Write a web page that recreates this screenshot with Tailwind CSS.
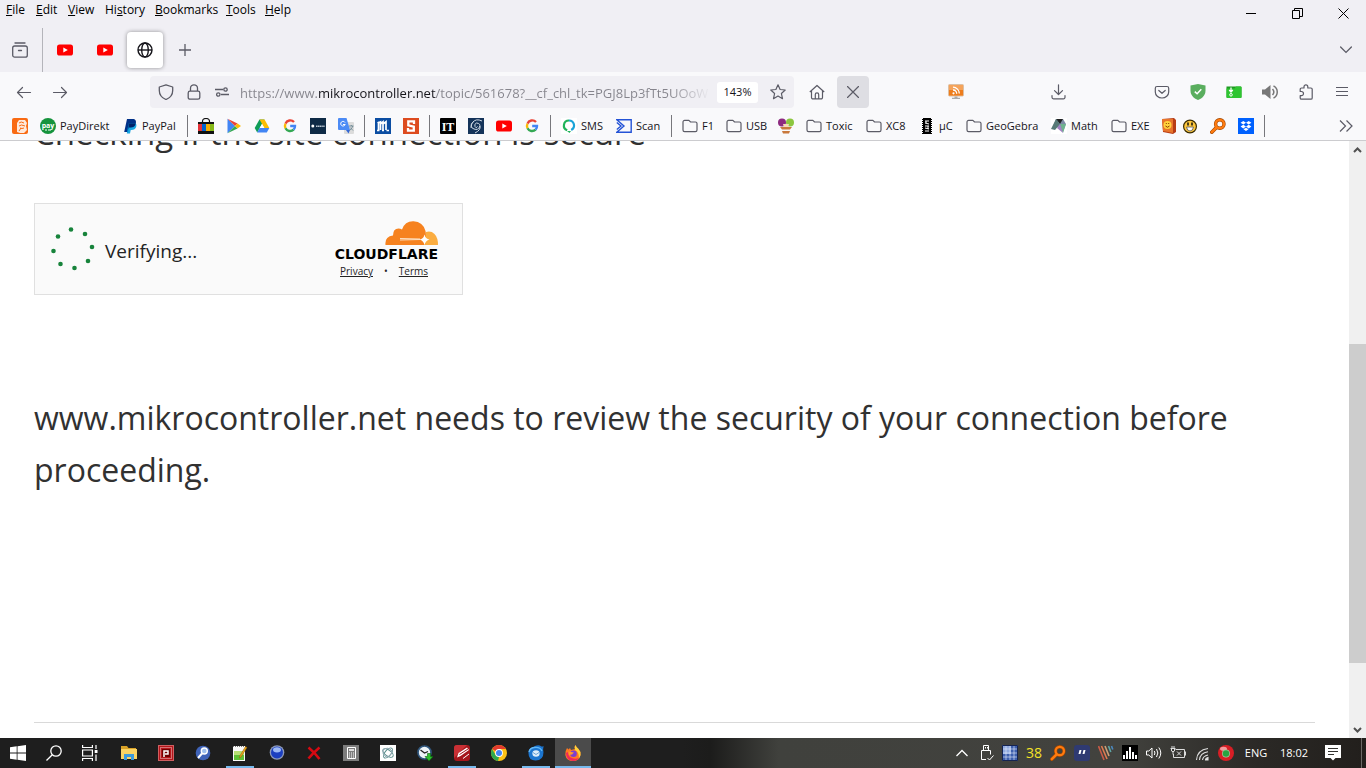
<!DOCTYPE html>
<html lang="en">

<head>
    <meta charset="UTF-8">
    <meta name="viewport" content="width=device-width, initial-scale=1.0">
    <title>www.mikrocontroller.net</title>
    <script src="https://cdn.jsdelivr.net/npm/@tailwindcss/browser@4"></script>
</head>

<body class="h-screen flex flex-col overflow-hidden bg-white font-['Open_Sans','Noto_Sans',sans-serif] text-[#15141a]">

    <!-- Shared icons -->
    <svg class="hidden">
        <symbol id="folder" viewBox="0 0 16 16">
            <path d="M1 4.2V12a1.6 1.6 0 0 0 1.6 1.6h10.8A1.6 1.6 0 0 0 15 12V5.6A1.6 1.6 0 0 0 13.4 4H8.6L6.9 2.4H2.6A1.6 1.6 0 0 0 1 4z" fill="none" stroke="#5b5b66" stroke-width="1.2" stroke-linejoin="round" />
        </symbol>
        <symbol id="youtube" viewBox="0 0 16 16">
            <rect y="2.4" width="16" height="11.2" rx="2.6" fill="#f00" />
            <path d="M6.3 5.5v5L10.8 8z" fill="#fff" />
        </symbol>
        <symbol id="google" viewBox="0 0 16 16">
            <g fill="none" stroke-width="2.4">
                <path d="M12 4A5.1 5.1 0 0 0 3.5 5.7" stroke="#ea4335" />
                <path d="M3.5 5.7a5.1 5.1 0 0 0 0 4.6" stroke="#fbbc05" />
                <path d="M3.5 10.3A5.1 5.1 0 0 0 11.6 11.6" stroke="#34a853" />
                <path d="M11.6 11.6A4.8 4.8 0 0 0 13 8H8.2" stroke="#4285f4" />
            </g>
        </symbol>
        <symbol id="magnifier" viewBox="0 0 16 16">
            <path d="M6.4 9.6 1.8 14.2" stroke="#a34700" stroke-width="3.6" stroke-linecap="round" />
            <circle cx="9.8" cy="6" r="4.2" fill="none" stroke="#a34700" stroke-width="3.4" />
            <path d="M6.4 9.6 1.8 14.2" stroke="#ff7b0f" stroke-width="2.4" stroke-linecap="round" />
            <circle cx="9.8" cy="6" r="4.2" fill="none" stroke="#ff7b0f" stroke-width="2.2" />
        </symbol>
    </svg>

    <!-- Menu bar and window controls -->
    <header class="bg-[#f0eff4] shrink-0">
        <div class="flex h-7 items-start justify-between">
            <nav class="flex h-5 items-center gap-3 pl-[6px] text-[12px] leading-4 text-black" aria-label="Menu">
                <button class="w-[18px] text-left"><u>F</u>ile</button>
                <button class="w-5 text-left"><u>E</u>dit</button>
                <button class="w-[25px] text-left"><u>V</u>iew</button>
                <button class="w-[38px] text-left">Hi<u>s</u>tory</button>
                <button class="w-[59px] text-left"><u>B</u>ookmarks</button>
                <button class="w-[27px] text-left"><u>T</u>ools</button>
                <button class="w-[25px] text-left"><u>H</u>elp</button>
            </nav>
            <div class="flex h-[27px]">
                <button class="grid w-[46px] place-items-center" aria-label="Minimize"><svg class="size-[11px]" viewBox="0 0 11 11"><path d="M0 5.5h10" stroke="#000" /></svg></button>
                <button class="grid w-[46px] place-items-center" aria-label="Restore"><svg class="size-[11px]" viewBox="0 0 11 11" fill="none" stroke="#000"><path d="M.5 2.5h7v8h-7zM2.5 2.5v-2h8v8h-3" /></svg></button>
                <button class="grid w-[46px] place-items-center" aria-label="Close"><svg class="size-[11px]" viewBox="0 0 11 11"><path d="M.5.5l10 10M10.5.5l-10 10" stroke="#000" /></svg></button>
            </div>
        </div>

        <!-- Tabs -->
        <div class="flex h-11 items-center">
            <button class="grid w-[42px] place-items-center pr-[2px]" aria-label="Recent browsing">
                <svg class="size-4" viewBox="0 0 16 16" fill="none" stroke="#5b5b66" stroke-width="1.3" stroke-linecap="round"><path d="M3 1h10" /><rect x=".7" y="4" width="14.6" height="11.2" rx="2" /><path d="M6.5 8.5h3" /></svg>
            </button>
            <div class="h-11 w-px bg-[#b4b4ba]"></div>
            <button class="ml-[2px] grid size-10 place-items-center" aria-label="YouTube"><svg class="size-4"><use href="#youtube" /></svg></button>
            <button class="grid size-10 place-items-center" aria-label="YouTube"><svg class="size-4"><use href="#youtube" /></svg></button>
            <button class="ml-[2px] grid size-9 place-items-center rounded bg-white shadow-[0_0_4px_rgba(0,0,0,0.4)]" aria-label="www.mikrocontroller.net">
                <svg class="size-4" viewBox="0 0 16 16" fill="none" stroke="#15141a" stroke-width="1.4"><circle cx="8" cy="8" r="7" /><ellipse cx="8" cy="8" rx="3.3" ry="7" /><path d="M1 8h14" /></svg>
            </button>
            <button class="ml-1 grid size-9 place-items-center" aria-label="New tab"><svg class="size-3" viewBox="0 0 12 12"><path d="M6 0v12M0 6h12" stroke="#5b5b66" stroke-width="1.3" /></svg></button>
            <button class="ml-auto grid w-10 place-items-center" aria-label="List all tabs"><svg class="h-2 w-3" viewBox="0 0 12 8"><path d="M.6 1 6 6.4 11.4 1" fill="none" stroke="#5b5b66" stroke-width="1.3" stroke-linecap="round" /></svg></button>
        </div>
    </header>

    <!-- Navigation toolbar -->
    <div class="flex h-10 shrink-0 items-center bg-[#f9f9fb] pr-[6px]">
        <div class="flex w-[150px] shrink-0 pl-[6px]">
            <button class="grid size-9 place-items-center" aria-label="Back"><svg class="size-4" viewBox="0 0 16 16" fill="none" stroke="#5b5b66" stroke-width="1.2" stroke-linecap="round" stroke-linejoin="round"><path d="M14.5 8.5H1.500M6.500 3.500 1.500 8.500l5 5" /></svg></button>
            <button class="grid size-9 place-items-center" aria-label="Forward"><svg class="size-4" viewBox="0 0 16 16" fill="none" stroke="#5b5b66" stroke-width="1.2" stroke-linecap="round" stroke-linejoin="round"><path d="M1.500 8.500h13M9.500 3.500l5 5-5 5" /></svg></button>
        </div>
        <div class="flex h-8 min-w-0 flex-1 items-center rounded bg-[#f0eff4] px-2">
            <button class="mr-3 shrink-0" aria-label="Tracking protection"><svg class="size-4" viewBox="0 0 16 16" fill="none" stroke="#5b5b66" stroke-width="1.3" stroke-linejoin="round"><path d="M8 .8 14.7 3v3.5c0 4.500-2.500 7.300-6.700 9-4.200-1.700-6.700-4.500-6.700-9V3z" /></svg></button>
            <button class="mr-3 shrink-0" aria-label="Site security"><svg class="size-4" viewBox="0 0 16 16" fill="none" stroke="#5b5b66" stroke-width="1.3"><rect x="2.200" y="7.200" width="11.600" height="8" rx="1.800" /><path d="M4.500 7V4.300a3.500 3.500 0 0 1 7 0V7" /></svg></button>
            <button class="mr-[10px] shrink-0" aria-label="Permissions"><svg class="size-4" viewBox="0 0 16 16" fill="none" stroke="#5b5b66" stroke-width="1.3"><path d="M1 5.500h8M7 10.500h8" /><circle cx="11.500" cy="5.500" r="1.700" /><circle cx="4.300" cy="10.500" r="1.700" /></svg></button>
            <input type="text" aria-label="Address" class="h-8 min-w-0 flex-1 bg-[linear-gradient(90deg,#85848c_78px,#15141a_78px,#15141a_196px,#85848c_196px,#85848c_430px,transparent_470px)] bg-clip-text pt-[2px] text-[13px] text-transparent outline-none" value="https://www.mikrocontroller.net/topic/561678?__cf_chl_tk=PGJ8Lp3fTt5UOoW">
            <button class="ml-[9px] h-[21px] w-[41px] shrink-0 rounded-[3px] bg-white text-[11px] leading-4">143%</button>
            <button class="ml-3 shrink-0" aria-label="Bookmark this page"><svg class="size-4" viewBox="0 0 16 16" fill="none" stroke="#5b5b66" stroke-width="1.2" stroke-linejoin="round"><path d="M8 .8l2.100 4.700 5.100.5-3.800 3.500 1.100 5.200L8 12.100l-4.500 2.600 1.100-5.200L.8 6l5.100-.5z" /></svg></button>
        </div>
        <button class="ml-[7px] grid size-8 shrink-0 place-items-center" aria-label="Home"><svg class="size-4" viewBox="0 0 16 16" fill="none" stroke="#5b5b66" stroke-width="1.2" stroke-linejoin="round"><path d="M.8 8 8 1.500 15.200 8M2.500 6.800V13.500a1.400 1.400 0 0 0 1.400 1.400h8.200a1.400 1.400 0 0 0 1.400-1.400V6.800M6.300 14.700V10.500a1.700 1.700 0 0 1 3.400 0v4.200" /></svg></button>
        <button class="ml-1 grid size-8 shrink-0 place-items-center rounded bg-[#dedee3]" aria-label="Stop"><svg class="size-3" viewBox="0 0 12 12"><path d="M.5.5l11 11M11.5.5l-11 11" stroke="#5b5b66" stroke-width="1.2" stroke-linecap="round" /></svg></button>
        <button class="ml-[69px] grid size-9 shrink-0 place-items-center" aria-label="Feeds">
            <svg class="size-4" viewBox="0 0 16 16"><rect x=".5" y=".5" width="15" height="11.500" rx="1" fill="#f5a35a" stroke="#dcc0a4" /><path d="M1 6h14v5.500H1z" fill="#ee7d1c" /><path d="M6.500 12.500h3v1.300h2.500V15H4v-1.200h2.500z" fill="#aaa" /><circle cx="5.500" cy="9.300" r="1.100" fill="#fff" /><path d="M5 6a3.500 3.500 0 0 1 3.700 3.700M5 3.200a6.400 6.400 0 0 1 6.300 6.400" fill="none" stroke="#fff" stroke-width="1.300" /></svg>
        </button>
        <button class="mx-[67px] grid size-9 shrink-0 place-items-center" aria-label="Downloads"><svg class="size-4" viewBox="0 0 16 16" fill="none" stroke="#5b5b66" stroke-width="1.2" stroke-linecap="round" stroke-linejoin="round"><path d="M7.500.8v9.700M3.500 6.600l4 3.900 4-3.900M1 11.500v1.800a1.500 1.500 0 0 0 1.500 1.500h10a1.500 1.500 0 0 0 1.500-1.500v-1.800" /></svg></button>
        <div class="flex shrink-0">
            <button class="grid size-9 place-items-center" aria-label="Save to Pocket"><svg class="size-4" viewBox="0 0 16 16" fill="none" stroke="#5b5b66" stroke-width="1.2" stroke-linecap="round" stroke-linejoin="round"><path d="M3 2.500h10a1.700 1.700 0 0 1 1.700 1.700V8A6.700 6 0 0 1 1.300 8V4.200A1.700 1.700 0 0 1 3 2.500zM4.800 6.500 8 9.300l3.200-2.800" /></svg></button>
            <button class="grid size-9 place-items-center" aria-label="Web protection"><svg class="size-4" viewBox="0 0 16 16"><path d="M8 0l7.500 1.500v5C15.500 11 12.500 14.300 8 16 3.500 14.300.5 11 .5 6.500v-5z" fill="#5aae5e" /><path d="M4.800 7.600l2.300 2.200 4.200-4.500" fill="none" stroke="#fff" stroke-width="1.500" /></svg></button>
            <button class="grid size-9 place-items-center" aria-label="Download folder"><svg class="size-4" viewBox="0 0 16 16"><path d="M.5 2.500h14q1 0 1 1V13q0 1-1 1H1.500q-1 0-1-1z" fill="#1d9a20" /><path d="M.5 4.500h8l1.500-2h4.500q1 0 1 1V13q0 1-1 1H1.500q-1 0-1-1z" fill="#2fc531" /><path d="M5 3.500v4M3.200 6l1.800 2 1.800-2" stroke="#fff" fill="none" stroke-width="1.300" /><circle cx="5" cy="10.800" r="1.300" fill="none" stroke="#fff" /></svg></button>
            <button class="grid size-9 place-items-center" aria-label="Sound"><svg class="size-4" viewBox="0 0 16 16"><path d="M0 5.500h3L8.500 1v14L3 10.500H0z" fill="#777" /><path d="M10.500 5a4.500 4.500 0 0 1 0 6M11.500 1.800a7 7 0 0 1 0 12.400" fill="none" stroke="#777" stroke-width="1.500" /></svg></button>
            <button class="grid size-9 place-items-center" aria-label="Extensions"><svg class="size-4" viewBox="0 0 16 16" fill="none" stroke="#5b5b66" stroke-width="1.2" stroke-linejoin="round"><path d="M2.200 7.500V5.300A1.300 1.300 0 0 1 3.500 4H6V2.700a1.900 1.900 0 0 1 3.800 0V4h3.100a1.300 1.300 0 0 1 1.300 1.300v8.600a1.300 1.300 0 0 1-1.300 1.300H3.500a1.300 1.300 0 0 1-1.300-1.300v-2.200h1.200a1.900 1.900 0 0 0 0-4.200z" /></svg></button>
            <button class="grid size-9 place-items-center" aria-label="Menu"><svg class="h-4 w-3" viewBox="0 0 12 16"><path d="M0 3.500h12M0 7.500h12M0 11.500h12" stroke="#5b5b66" stroke-width="1.2" /></svg></button>
        </div>
    </div>

    <!-- Bookmarks -->
    <nav class="flex h-[29px] shrink-0 items-center gap-3 whitespace-nowrap border-b border-[#cccccf] bg-[#f9f9fb] pl-3 text-[11px] leading-4 text-[#15141a] [&_svg]:size-4 [&_svg]:shrink-0 [&>a]:flex [&>a]:shrink-0 [&>a]:items-center [&>a]:gap-1" aria-label="Bookmarks">
        <a href="#" aria-label="ING"><svg viewBox="0 0 16 16"><rect width="16" height="16" rx="2" fill="#f96a12" /><path d="M5 14V5l2-3h6l2 3-1 3 1 4-3 3H8z" fill="#fff" opacity=".85" /><path d="M7 5q2-2 5 0M7 8q2-2 6 0M8 10q2 1 4 0M7 13l2-3M3 3v10" fill="none" stroke="#f96a12" /></svg></a>
        <a href="#"><svg viewBox="0 0 16 16"><circle cx="8" cy="8" r="8" fill="#15933c" /><text x="8" y="9.500" font-size="7" font-weight="700" text-anchor="middle" fill="#fff">pay</text><path d="M5 12h2M8 12h3" stroke="#fff" /></svg><span class="w-[50px]">PayDirekt</span></a>
        <a href="#"><svg viewBox="0 0 16 16"><path d="M5 1h5.500c3 0 4 2 3.300 4.500C13 8.500 11 9.500 8.500 9.500H7L6 14H2.200z" fill="#003087" /><path d="M6.500 5.500h7.200c1 1 .8 2.500.4 3.500-.6 2-2.200 3-4.600 3H8.700L8 15.500H4.800z" fill="#009cde" opacity=".9" /><path d="M6.500 5.500h7.200c-.6 3-2.700 4-5.200 4H7L6.500 11.500z" fill="#012169" /></svg><span class="w-[35px]">PayPal</span></a>
        <div class="-mx-[2px] h-[22px] w-px shrink-0 bg-[#77777c]"></div>
        <a href="#" aria-label="Shop"><svg viewBox="0 0 16 16"><path d="M4.500 5V3.500a3.500 3 0 0 1 7 0V5" fill="none" stroke="#111" stroke-width="1.200" /><path d="M0 4h16v12H0z" fill="#111" /><path d="M0 6h4v7H0z" fill="#e53238" /><path d="M4 6h4v7H4z" fill="#0064d2" /><path d="M8 6h4v7H8z" fill="#f5af02" /><path d="M12 6h4v7h-4z" fill="#86b817" /></svg></a>
        <a href="#" aria-label="Google Play"><svg viewBox="0 0 16 16"><path d="M1.500.8 9 8l-7.500 7.200z" fill="#4285f4" /><path d="M1.500.8 11.500 5.500 9 8z" fill="#ea4335" /><path d="M1.500 15.200 11.500 10.500 9 8z" fill="#34a853" /><path d="M11.500 5.500 15 8l-3.500 2.500L9 8z" fill="#fbbc04" /></svg></a>
        <a href="#" aria-label="Google Drive"><svg viewBox="0 0 16 16"><path d="M5.500 1.500h5L8 6 3.200 14.500.7 10z" fill="#0f9d58" /><path d="M5.500 1.500h5L15.300 10h-5z" fill="#fbbc04" /><path d="M5.600 10h9.700l-2.500 4.500H3.200z" fill="#4285f4" /><path d="M8 6 5.600 10h4.700z" fill="#fff" /></svg></a>
        <a href="#" aria-label="Google"><svg><use href="#google" /></svg></a>
        <a href="#" aria-label="DeepL"><svg viewBox="0 0 16 16"><rect width="16" height="16" fill="#0f2b46" /><circle cx="2.800" cy="8" r="1.500" fill="#fff" /><path d="M6 8.200h9" stroke="#b9c5d0" stroke-width="1.600" stroke-dasharray="1.400 .4" /></svg></a>
        <a href="#" aria-label="Google Translate"><svg viewBox="0 0 16 16"><rect x="6" y="4" width="10" height="12" rx="1" fill="#dcdcdc" /><path d="M1 0h7.500l3.500 12H1q-1 0-1-1V1q0-1 1-1z" fill="#4c8bf5" /><path d="M12 12H8l2.500 3.500z" fill="#3367d6" /><path d="M7 4.500A2.300 2.300 0 1 0 7.200 6.500H5" fill="none" stroke="#fff" /><path d="M11 8h4.500M13.300 7v1M14.800 8q-.8 3-3.300 4.500M12.200 9.500l2.800 3" fill="none" stroke="#607d8b" stroke-width=".8" /></svg></a>
        <div class="-mx-[2px] h-[22px] w-px shrink-0 bg-[#77777c]"></div>
        <a href="#" aria-label="Mouser"><svg viewBox="0 0 16 16"><rect width="16" height="16" fill="#0b4da2" /><path d="M2 12.500h2.500M3.500 12V5l2-1v8M5.500 6l2.500-2.200V12M8 6l3-2.200V12M11.500 12.500H14M7 12.500h2M2.500 5l2-1" fill="none" stroke="#fff" stroke-width="1.700" /></svg></a>
        <a href="#" aria-label="Shop S"><svg viewBox="0 0 16 16"><rect width="16" height="16" fill="#dd4b1f" /><path d="M11 6V3.300H5.300v4L10.800 8.700v4H5V10" fill="none" stroke="#fff" stroke-width="2.300" /></svg></a>
        <div class="-mx-[2px] h-[22px] w-px shrink-0 bg-[#77777c]"></div>
        <a href="#" aria-label="IT"><svg viewBox="0 0 16 16"><rect width="16" height="16" rx="1" fill="#000" /><text x="8" y="12.500" font-family="Liberation Serif" font-size="12" font-weight="700" text-anchor="middle" fill="#fff">IT</text></svg></a>
        <a href="#" aria-label="Storm"><svg viewBox="0 0 16 16"><rect width="16" height="16" fill="#15345a" /><path d="M14 3Q8 0 4.500 4.500T6 11q4 1.500 5.500-2T8.500 5Q6 6 7 8.500t2.500 0M12 8q1 4-5 7M3 10q0-5 3-7" fill="none" stroke="#cfd9e4" /></svg></a>
        <a href="#" aria-label="YouTube"><svg><use href="#youtube" /></svg></a>
        <a href="#" aria-label="Google"><svg><use href="#google" /></svg></a>
        <div class="-mx-[2px] h-[22px] w-px shrink-0 bg-[#77777c]"></div>
        <a href="#"><svg viewBox="0 0 16 16" fill="none" stroke-width="2.200"><rect width="16" height="16" fill="#fff" /><path d="M6.200 12.200A5 5 0 0 1 8 2.500" stroke="#20b35a" /><path d="M8 2.500a5 5 0 0 1 2.200 9.500" stroke="#1aa3d8" /><path d="M6 13h4l-1.500 2z" fill="#20b35a" stroke="none" /></svg><span class="w-[23px]">SMS</span></a>
        <a href="#"><svg viewBox="0 0 16 16" fill="none" stroke="#2453d6" stroke-width="1.400"><path d="M.8 1.700h14.400v12.600H.8L8 8z" /><path d="M.8 4.500 5 8 .8 11.500" /></svg><span class="w-[25px]">Scan</span></a>
        <div class="-mx-[2px] h-[22px] w-px shrink-0 bg-[#77777c]"></div>
        <a href="#"><svg><use href="#folder" /></svg><span class="w-3">F1</span></a>
        <a href="#"><svg><use href="#folder" /></svg><span class="w-[21px]">USB</span></a>
        <a href="#" class="-ml-px" aria-label="Basket"><svg viewBox="0 0 16 16"><circle cx="4" cy="4.500" r="4" fill="#8d2a80" /><circle cx="12" cy="4.500" r="4" fill="#8cc63f" /><path d="M5 6h6l-1 4H6z" fill="#f6d7b8" /><path d="M2 9h12l-2 2.500H4z" fill="#c9793c" /><path d="M4 13h8l-1 2.500H5z" fill="#c9793c" /></svg></a>
        <a href="#"><svg><use href="#folder" /></svg><span class="w-7">Toxic</span></a>
        <a href="#"><svg><use href="#folder" /></svg><span class="w-[21px]">XC8</span></a>
        <a href="#"><svg viewBox="0 0 16 16"><path d="M4 0h8v16H4z" fill="#000" /><path d="M3.500 1v15M12.500 1v15" stroke="#000" stroke-dasharray="1 1" /><path d="M6 3h4M6 5l4 1M6 8h4M6 10l4 1M6 13h4M7 3v2M9 8v3" stroke="#fff" /></svg><span class="w-[15px]">µC</span></a>
        <a href="#"><svg><use href="#folder" /></svg><span class="w-[53px]">GeoGebra</span></a>
        <a href="#"><svg viewBox="0 0 16 16"><rect width="16" height="16" fill="#fff" /><path d="M5 1h7l3 5-3 8-6-5-5 2z" fill="#7e8ba6" /><path d="M5 1h7L9 6z" fill="#222" /><path d="M0 11 5 1l4 5-5 6z" fill="#577a77" /><path d="M9 6l6 0-3 9z" fill="#6fb28f" /><path d="M9 6l3 9-6-5z" fill="#a583c4" /></svg><span class="w-7">Math</span></a>
        <a href="#"><svg><use href="#folder" /></svg><span class="w-[19px]">EXE</span></a>
        <a href="#" class="-ml-px" aria-label="Smiley book"><svg viewBox="0 0 16 16"><path d="M1 1l12-1 2 2v12l-3 2-10-2z" fill="#b83c14" /><path d="M1 1h11v14L2 13z" fill="#e8752b" /><circle cx="6.500" cy="7" r="4" fill="#ffd23c" /><path d="M4.500 8q2 2.500 4 0M5.300 5v1M7.700 5v1" fill="none" stroke="#8b3b00" /></svg></a>
        <a href="#" class="-ml-[7px]" aria-label="Smiley"><svg viewBox="0 0 16 16"><circle cx="8" cy="8.500" r="6.400" fill="#ffc83d" stroke="#3a2c00" stroke-width="1.200" /><path d="M6 4.500v3M10 4.500v3" stroke="#111" stroke-width="1.500" /><path d="M4.500 9h7q-.5 4-3.500 4t-3.500-4z" fill="#fff" stroke="#555" stroke-width=".8" /></svg></a>
        <a href="#" aria-label="Search"><svg><use href="#magnifier" /></svg></a>
        <a href="#" aria-label="Dropbox"><svg viewBox="0 0 16 16"><rect width="16" height="16" fill="#0061fe" /><path d="M5.300 3 8 4.800 5.300 6.600 2.600 4.800zM10.700 3l2.700 1.800-2.700 1.800L8 4.800zM5.300 6.800 8 8.600l-2.700 1.800-2.700-1.800zM10.700 6.800l2.700 1.800-2.700 1.800L8 8.600zM8 9.800l2.500 1.500L8 13l-2.500-1.700z" fill="#fff" /></svg></a>
        <div class="-mx-[2px] h-[22px] w-px shrink-0 bg-[#77777c]"></div>
        <button class="ml-auto mr-3" aria-label="More bookmarks"><svg viewBox="0 0 16 16" fill="none" stroke="#5b5b66" stroke-width="1.200"><path d="M2 2.500 7.500 8 2 13.500M8.500 2.500 14 8l-5.500 5.500" /></svg></button>
    </nav>

    <!-- Page -->
    <div class="flex min-h-0 flex-1">
        <main class="flex min-w-0 flex-1 flex-col overflow-hidden pl-[34px] pr-[34px] text-[#313131]">
            <h1 class="-mt-[34px] shrink-0 text-[33px] leading-[52px]">Checking if the site connection is secure</h1>
            <section class="mt-11 flex h-[92px] w-[429px] shrink-0 items-center justify-between border border-[#e0e0e0] bg-[#fafafa] pl-4 pr-6 text-[#232323]">
                <div class="flex items-center gap-[10px]" role="status">
                    <svg class="size-11" viewBox="0 0 44 44" fill="#17833b">
                        <circle cx="20" cy="2.500" r="2.300" /><circle cx="34" cy="7" r="2.300" /><circle cx="41" cy="20" r="2.300" /><circle cx="37" cy="34" r="2.300" />
                        <circle cx="23.500" cy="41" r="2.300" /><circle cx="9.500" cy="37" r="2.300" /><circle cx="2.500" cy="24" r="2.300" /><circle cx="7" cy="9.500" r="2.300" />
                    </svg>
                    <span class="pt-[3px] text-[19px] leading-7">Verifying...</span>
                </div>
                <div class="flex flex-col items-end pt-[2px]">
                    <svg class="h-[25px] w-[53px]" viewBox="0 0 53 25">
                        <path d="M41 11q5-1.500 8.500 2T53 24H37z" fill="#fbad41" />
                        <path d="M.5 24Q-.5 15.500 8 14.500 8 7.500 13.500 7.500q2 0 3.500 1Q20 0 28.500.300 38 .8 40.500 10q1 4-1.500 14z" fill="#f6821f" />
                        <path d="M15 17.500 35 18M15 19l20-.5" stroke="#fde0c2" />
                        <path d="M39.500 13.500q1 4.500 5 5-4 1-5 5.500-1-4.500-5-5.500 4-.5 5-5z" fill="#fff" />
                    </svg>
                    <div class="font-['DejaVu_Sans',sans-serif] text-[14px] font-bold leading-4 text-black">CLOUDFLARE</div>
                    <div class="flex items-center gap-[11px] pr-[10px] pt-px text-[10px] leading-4">
                        <a href="#" class="underline">Privacy</a>
                        <span>•</span>
                        <a href="#" class="underline">Terms</a>
                    </div>
                </div>
            </section>
            <p class="mt-[97px] text-[32px] leading-[52px]">www.mikrocontroller.net needs to review the security of your connection before proceeding.</p>
            <hr class="mb-[15px] mt-auto border-[#d9d9d9]">
        </main>

        <!-- Scrollbar -->
        <div class="flex w-[17px] shrink-0 flex-col bg-[#f0f0f0]">
            <button class="grid h-[17px] place-items-center" aria-label="Scroll up"><svg class="h-[6px] w-[9px]" viewBox="0 0 9 6"><path d="M1 5l3.500-3.500L8 5" fill="none" stroke="#505050" stroke-width="2" /></svg></button>
            <div class="flex-[186]"></div>
            <div class="flex-[319] bg-[#cdcdcd]"></div>
            <div class="flex-[58]"></div>
            <button class="grid h-[17px] place-items-center" aria-label="Scroll down"><svg class="h-[6px] w-[9px]" viewBox="0 0 9 6"><path d="M1 1l3.500 3.500L8 1" fill="none" stroke="#505050" stroke-width="2" /></svg></button>
        </div>
    </div>

    <!-- Taskbar -->
    <footer class="flex h-[30px] shrink-0 justify-between bg-[linear-gradient(90deg,#1e1e1e_50%,#1c1c1b_52%,#40413d_57%,#42423e_82%,#2b2926_92%,#221f1c)] text-white [&_button]:grid [&_button]:h-full [&_button]:place-items-center [&_svg]:size-4">
        <div class="flex">
            <button class="w-9" aria-label="Start"><svg viewBox="0 0 16 16" fill="#fff"><path d="M0 2.200 6.700 1.300v6.200H0zM7.500 1.200 16 0v7.500H7.500zM0 8.500h6.700v6.200L0 13.800zM7.500 8.500H16V16l-8.500-1.200z" /></svg></button>
            <button class="w-9" aria-label="Search"><svg viewBox="0 0 16 16" fill="none" stroke="#fff" stroke-width="1.300"><circle cx="10" cy="6" r="5.200" /><path d="M6.300 9.700.5 15.500" /></svg></button>
            <button class="mr-[3px] w-9" aria-label="Task view"><svg viewBox="0 0 16 16" fill="none" stroke="#fff" stroke-width="1.200"><path d="M.6 0v2.500h9.800V0M.6 5h9.800v6H.6zM.6 16v-2.500h9.800V16M14 0v4M14 9.500V16" /><path d="M12.700 5h2.800v3h-2.800z" fill="#fff" stroke="none" /></svg></button>
            <div class="flex gap-px">
                <button class="w-9" aria-label="File Explorer"><svg viewBox="0 0 16 16"><path d="M0 1h6l1.500 2H15v3H0z" fill="#d9a227" /><path d="M0 4h16v10H0z" fill="#fbd464" /><path d="M3 15V9h10v6h-3v-3H6v3z" fill="#3d9bdc" /></svg></button>
                <button class="w-9" aria-label="PDF tool"><svg viewBox="0 0 16 16"><rect width="16" height="16" fill="#b3161b" /><rect x=".5" y=".5" width="15" height="15" fill="none" stroke="#e8a9a9" stroke-dasharray="1 1" /><rect x="2.500" y="2.500" width="11" height="11" fill="none" stroke="#f3cccc" stroke-dasharray="1 1" /><rect x="4" y="4" width="8" height="8" fill="#6f0000" /><path d="M6 12V6h4v3H7" fill="none" stroke="#fff" stroke-width="1.500" /></svg></button>
                <button class="w-9" aria-label="Finder"><svg viewBox="0 0 16 16"><circle cx="8" cy="8" r="7.300" fill="#3f63b8" /><circle cx="9.300" cy="6" r="3" fill="#9fc0ee" stroke="#fff" stroke-width="1.400" /><path d="M7 8.500 3 13" stroke="#fff" stroke-width="2" /></svg></button>
                <button class="relative w-9" aria-label="Notepad"><svg viewBox="0 0 16 16"><path d="M1 1h12v15H1z" fill="#fafafa" /><path d="M2 8h10v7H2z" fill="#5fc034" /><path d="M2 6h10v4H2z" fill="#b6df73" /><path d="M1 1.500h12" stroke="#777" stroke-dasharray="1 1" /><path d="M15 2.500 9 12l-1.500 1 .3-2L13.500 1.500z" fill="#f0a81c" stroke="#8a5b00" stroke-width=".5" /></svg><span class="absolute inset-x-1 bottom-0 h-[2px] bg-[#76b9ed]"></span></button>
                <button class="w-9" aria-label="Orb"><svg viewBox="0 0 16 16"><circle cx="8" cy="7.500" r="7.300" fill="#8d9ab8" /><circle cx="8" cy="7.500" r="6" fill="#1c3fc0" /><ellipse cx="8" cy="4.800" rx="4" ry="2.600" fill="#9db9f5" /></svg></button>
                <button class="w-9" aria-label="Close tool"><svg viewBox="0 0 16 16"><path d="M2.500 2.500Q8 7 13.500 14M13.500 2.500Q7 8 2.500 13.500" fill="none" stroke="#d60a12" stroke-width="2.600" /></svg></button>
                <button class="w-9" aria-label="Calculator"><svg viewBox="0 0 16 16"><rect width="16" height="16" fill="#7c7c7c" /><path d="M4.500 2.500h8v11h-8z" fill="none" stroke="#fff" /><path d="M6 5h5" stroke="#fff" stroke-width="1.500" /><path d="M6 8h5M6 10h5M6 12h5" stroke="#fff" stroke-dasharray="1 1" /></svg></button>
                <button class="w-9" aria-label="Atom"><svg viewBox="0 0 16 16"><rect width="16" height="16" fill="#fff" /><g fill="none" stroke="#5a8f8c"><ellipse cx="8" cy="8" rx="6" ry="3" transform="rotate(35 8 8)" /><ellipse cx="8" cy="8" rx="6" ry="3" transform="rotate(-50 8 8)" /><path d="M3 5q5-4 9 1-1 6-6 6Q2 9 3 5z" stroke="#93a8b4" /></g></svg></button>
                <button class="w-9" aria-label="Time sync"><svg viewBox="0 0 16 16"><circle cx="7.500" cy="7.500" r="6.500" fill="#eef4f8" stroke="#31577d" stroke-width="1.700" /><path d="M3.500 5 7.500 8 11 6.500" fill="none" stroke="#222" stroke-width="1.300" /><path d="M10.500 8.500h3v3H16L12 16l-4-4.500h2.500z" fill="#2fbf2f" stroke="#08670a" stroke-width=".6" /></svg></button>
                <button class="relative w-9" aria-label="Editor"><svg viewBox="0 0 16 16"><rect width="16" height="16" rx="3" fill="#a5161c" /><path d="M0 13V3q0-3 3-3h10z" fill="#c93035" /><path d="M3 12.500 4.500 8 13 2.500l2 2.500-8.500 6z" fill="#fff" /><path d="M5.500 9.500 14 4" stroke="#a5161c" /><path d="M9 13.500 15 9" stroke="#fff" /></svg><span class="absolute inset-x-1 bottom-0 h-[2px] bg-[#76b9ed]"></span></button>
                <button class="w-9" aria-label="Chrome"><svg viewBox="0 0 16 16"><circle cx="8" cy="8" r="8" fill="#fbc116" /><path d="M8 8 1.100 4A8 8 0 0 1 14.900 4H8z" fill="#e33b2e" /><path d="M1.100 4 4.600 10 8 12 7 16A8 8 0 0 1 1.100 4z" fill="#2da94f" /><circle cx="8" cy="8" r="3.900" fill="#fff" /><circle cx="8" cy="8" r="3" fill="#4285f4" /></svg></button>
                <button class="relative w-9" aria-label="Thunderbird"><svg viewBox="0 0 16 16"><path d="M5 2Q10-1 13.500 1.500L16 1.500Q14.500 3 15.500 7q0 8.500-8 8.500Q0 15.500.5 7 1 3.500 3 3z" fill="#1b75d0" /><path d="M1 7q1-4 5-4.500Q12 1.500 14 6" fill="none" stroke="#63b8f5" stroke-width="1.300" /><ellipse cx="8" cy="8.500" rx="3.600" ry="3.200" fill="#dcecfa" /><path d="M5 7.500 8 9.500 11 7.500" fill="none" stroke="#6aa3d8" /></svg><span class="absolute inset-x-1 bottom-0 h-[2px] bg-[#76b9ed]"></span></button>
                <button class="relative w-9 bg-[#4b4b4b]" aria-label="Firefox"><svg viewBox="0 0 16 16"><path d="M2 3l1.500 1.500L5 3l1 2 4-1Q8.500 2 10.500 0q.5 2 3 4 2.500 2.500 2 6-1 6-7.500 6T.3 10Q0 6 2 3z" fill="#ff7a22" /><path d="M10.500 0q.5 2 3 4 2.500 2.500 2 6-.5 2-1.500 3 0-6-4-8-1-3 .5-5z" fill="#ffd23a" /><path d="M1 8q0 7 7 8 4 0 6-3-4 1.500-7 0Q3 12 3 7z" fill="#f0285a" /><circle cx="8.500" cy="8.800" r="3.300" fill="#7b3fd0" /><path d="M3.500 6.500 9 7.500 7 9.500q-2 0-3 1z" fill="#ff9a2a" /></svg><span class="absolute inset-x-0 bottom-0 h-[2px] bg-[#76b9ed]"></span></button>
            </div>
        </div>

        <div class="flex items-center">
            <button class="w-6" aria-label="Show hidden icons"><svg viewBox="0 0 16 16"><path d="M2.500 11 8 5.500 13.500 11" fill="none" stroke="#fff" stroke-width="1.300" /></svg></button>
            <button class="w-6" aria-label="Eject USB"><svg viewBox="0 0 16 16" fill="none" stroke="#fff"><path d="M5.500 5V.5h5V5M8 14.500H3.500V5.500h9v4M7.500 2v1.500M9.500 2v1.500M9.500 13l2 2 4-4.500" /></svg></button>
            <button class="w-6" aria-label="Monitor"><svg viewBox="0 0 16 16"><rect width="16" height="16" fill="#3d5fae" /><path d="M1 1h8v8H1z" fill="#8fa9df" /><path d="M0 4h16M0 8h16M0 12h16M4 0v16M8 0v16M12 0v16" stroke="#e8eefc" stroke-width=".6" /><path d="M.5.5h15v15H.5z" fill="none" stroke="#152452" /></svg></button>
            <button class="w-6 text-[14px] leading-5 text-[#f5e227]" aria-label="Temperature 38">38</button>
            <button class="w-6" aria-label="Search everything"><svg><use href="#magnifier" /></svg></button>
            <button class="w-6" aria-label="Quotes"><svg viewBox="0 0 16 16"><rect width="16" height="16" rx="3" fill="#2f3a72" /><path d="M5.500 5h2l-1 4H4.500zM9.500 5h2l-1 4H8.500z" fill="#fff" /></svg></button>
            <button class="w-6" aria-label="Stripes"><svg viewBox="0 0 16 16" stroke-width="1.600"><path d="M.5 1l5.500 14" stroke="#c95b48" /><path d="M3.500 1 9 14" stroke="#e07a50" /><path d="M7 1l4 10" stroke="#cfa078" /><path d="M10.500 1l2.300 6" stroke="#5fa5a5" /><path d="M13.500 1l1.300 3.500" stroke="#4b88c0" /></svg></button>
            <button class="w-6" aria-label="Levels"><svg viewBox="0 0 16 16"><rect width="16" height="16" fill="#000" /><path d="M2 14v-4M5 14V6M8 14V2M11 14V7M14 14v-4" stroke="#fff" stroke-width="2" /></svg></button>
            <button class="w-6" aria-label="Volume"><svg viewBox="0 0 16 16" fill="none" stroke="#fff"><path d="M.5 6h2.300L6 3v10L2.800 10H.5zM8.300 6q1.300 2 0 4M10.500 4q2.700 4 0 8M12.800 2.500q4 5.500 0 11" /></svg></button>
            <button class="w-6" aria-label="Battery"><svg viewBox="0 0 16 16" fill="none" stroke="#ddd"><path d="M5.500 4.500h9v8h-11V9M15.500 6.500v4M.5 3.500h5M1.500 3.500V6q1.500 1.500 3 0V3.500M3 7v2.500M2 1v2M4 1v2M7 6.500l4 4M11 6.500l-4 4" /></svg></button>
            <button class="w-6" aria-label="Network"><svg viewBox="0 0 16 16" fill="none" stroke="#ddd" stroke-width="1.100"><path d="M2.500 15Q3 5 14 3.500M5.500 15Q6 8 14 6.800M8.500 15q.5-4 5.500-5" /><path d="M11.500 15q0-2 2.500-2.500V15z" fill="#fff" /></svg></button>
            <button class="w-6" aria-label="Security status"><svg viewBox="0 0 16 16"><circle cx="8" cy="8" r="8" fill="#d81e25" /><ellipse cx="5.500" cy="3.800" rx="3.500" ry="2" fill="#f19a9d" /><circle cx="8" cy="8.500" r="3.900" fill="#a8c9a4" /><circle cx="8" cy="8.500" r="3.200" fill="#29a341" /></svg></button>
            <button class="ml-[6px] w-6 whitespace-nowrap text-[11px] leading-4">ENG</button>
            <button class="ml-3 w-7 whitespace-nowrap text-[11px] leading-4">18:02</button>
            <button class="ml-[11px] w-7" aria-label="Notifications"><svg viewBox="0 0 16 16"><path d="M0 0h16v13h-5.500L8 15.500 5.500 13H0z" fill="#fff" /><path d="M3 3.500h10M3 6.500h10M3 9.500h6" stroke="#33322f" stroke-width="1.200" /></svg></button>
            <div class="ml-[14px] mr-1 h-full w-px bg-[#6b6966]"></div>
        </div>
    </footer>
</body>

</html>
